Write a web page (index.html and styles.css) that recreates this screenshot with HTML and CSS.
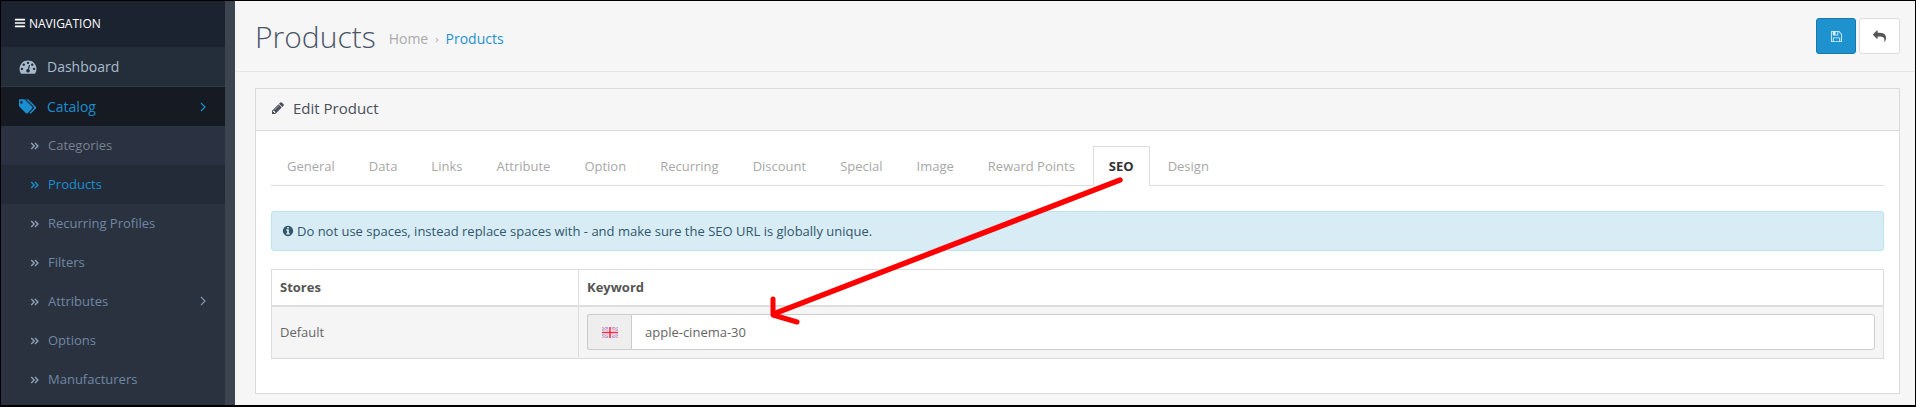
FILE: index.html
```html
<!DOCTYPE html>
<html lang="en">
<head>
    <meta charset="UTF-8">
    <meta name="viewport" content="width=device-width, initial-scale=1.0">
    <title>Products</title>
    <link rel="stylesheet" href="styles.css">
</head>
<body>
    <svg class="sprite" xmlns="http://www.w3.org/2000/svg">
        <symbol id="i-bars" viewBox="0 0 1792 1792"><path d="M1664 1344v128q0 26-19 45t-45 19h-1408q-26 0-45-19t-19-45v-128q0-26 19-45t45-19h1408q26 0 45 19t19 45zm0-512v128q0 26-19 45t-45 19h-1408q-26 0-45-19t-19-45v-128q0-26 19-45t45-19h1408q26 0 45 19t19 45zm0-512v128q0 26-19 45t-45 19h-1408q-26 0-45-19t-19-45v-128q0-26 19-45t45-19h1408q26 0 45 19t19 45z"/></symbol>
        <symbol id="i-dash" viewBox="0 0 1792 1792"><path d="M384 1152q0-53-37.5-90.5t-90.5-37.5-90.5 37.5-37.5 90.5 37.5 90.5 90.5 37.5 90.5-37.5 37.5-90.5zm192-448q0-53-37.5-90.5t-90.5-37.5-90.5 37.5-37.5 90.5 37.5 90.5 90.5 37.5 90.5-37.5 37.5-90.5zm428 481l101-382q6-26-7.5-48.5t-38.5-29.5-48 6.5-30 39.5l-101 382q-60 5-107 43.5t-63 98.5q-20 77 20 146t117 89 146-20 89-117q16-60-6-117t-72-91zm660-33q0-53-37.5-90.5t-90.5-37.5-90.5 37.5-37.5 90.5 37.5 90.5 90.5 37.5 90.5-37.5 37.5-90.5zm-640-640q0-53-37.5-90.5t-90.5-37.5-90.5 37.5-37.5 90.5 37.5 90.5 90.5 37.5 90.5-37.5 37.5-90.5zm448 192q0-53-37.5-90.5t-90.5-37.5-90.5 37.5-37.5 90.5 37.5 90.5 90.5 37.5 90.5-37.5 37.5-90.5zm320 448q0 261-141 483-19 29-54 29h-1402q-35 0-54-29-141-221-141-483 0-182 71-348t191-286 286-191 348-71 348 71 286 191 191 286 71 348z"/></symbol>
        <symbol id="i-tags" viewBox="0 0 1920 1792"><path d="M384 448q0-53-37.5-90.5t-90.5-37.5-90.5 37.5-37.5 90.5 37.5 90.5 90.5 37.5 90.5-37.5 37.5-90.5zm1067 576q0 53-37 90l-491 492q-39 37-91 37-53 0-90-37l-715-716q-38-37-64.5-101t-26.5-117v-416q0-52 38-90t90-38h416q53 0 117 26.5t102 64.5l715 714q37 39 37 91zm384 0q0 53-37 90l-491 492q-39 37-91 37-36 0-59-14t-53-45l470-470q37-37 37-90 0-52-37-91l-715-714q-38-38-102-64.5t-117-26.5h224q53 0 117 26.5t102 64.5l715 714q37 39 37 91z"/></symbol>
        <symbol id="i-double" viewBox="0 0 12 12"><path d="M1.5 2.5 5 6 1.5 9.5M6 2.5 9.5 6 6 9.5" fill="none" stroke="currentColor" stroke-width="1.7"/></symbol>
        <symbol id="i-angle" viewBox="0 0 8 12"><path d="M2 2 6 6 2 10" fill="none" stroke="currentColor" stroke-width="1.2"/></symbol>
        <symbol id="i-pencil" viewBox="0 0 1792 1792"><path d="M491 1536l91-91-235-235-91 91v107h128v128h107zm523-928q0-22-22-22-10 0-17 7l-542 542q-7 7-7 17 0 22 22 22 10 0 17-7l542-542q7-7 7-17zm-54-192l416 416-832 832h-416v-416zm683 96q0 53-37 90l-166 166-416-416 166-165q36-38 90-38 53 0 91 38l235 234q37 39 37 91z"/></symbol>
        <symbol id="i-info" viewBox="0 0 1792 1792"><path d="M1152 1376v-160q0-14-9-23t-23-9h-96v-512q0-14-9-23t-23-9h-320q-14 0-23 9t-9 23v160q0 14 9 23t23 9h96v320h-96q-14 0-23 9t-9 23v160q0 14 9 23t23 9h448q14 0 23-9t9-23zm-128-896v-160q0-14-9-23t-23-9h-192q-14 0-23 9t-9 23v160q0 14 9 23t23 9h192q14 0 23-9t9-23zm640 416q0 209-103 385.5t-279.5 279.5-385.5 103-385.5-103-279.5-279.5-103-385.5 103-385.5 279.5-279.5 385.5-103 385.5 103 279.5 279.5 103 385.5z"/></symbol>
        <symbol id="i-save" viewBox="0 0 1792 1792"><path d="M512 1536h768v-384h-768v384zm896 0h128v-896q0-14-10-38.5t-20-34.5l-281-281q-10-10-34-20t-39-10v416q0 40-28 68t-68 28h-576q-40 0-68-28t-28-68v-416h-128v1280h128v-416q0-40 28-68t68-28h832q40 0 68 28t28 68v416zm-384-928v-320q0-13-9.5-22.5t-22.5-9.5h-192q-13 0-22.5 9.5t-9.5 22.5v320q0 13 9.5 22.5t22.5 9.5h192q13 0 22.5-9.5t9.5-22.5zm640 32v928q0 40-28 68t-68 28h-1344q-40 0-68-28t-28-68v-1344q0-40 28-68t68-28h928q40 0 88 20t76 48l280 280q28 28 48 76t20 88z"/></symbol>
        <symbol id="i-reply" viewBox="0 0 1792 1792"><path d="M1792 1120q0 166-127 451-3 7-10.5 24t-13.5 30-13 22q-12 17-28 17-15 0-23.5-10t-8.5-25q0-9 2.5-26.5t2.5-23.5q5-68 5-123 0-101-17.5-181t-48.5-138.5-80-101-105.5-69.5-133-42.5-154-21.5-175.5-6h-224v256q0 26-19 45t-45 19-45-19l-512-512q-19-19-19-45t19-45l512-512q19-19 45-19t45 19 19 45v256h224q713 0 875 403 53 134 53 333z"/></symbol>
    </svg>

    <div class="frame">
        <aside class="sidebar">
            <nav class="menu">
                <div class="nav-title"><svg class="ico-bars"><use href="#i-bars"/></svg>NAVIGATION</div>
                <a class="top-item"><svg class="ico-top"><use href="#i-dash"/></svg>Dashboard</a>
                <a class="top-item active"><svg class="ico-top"><use href="#i-tags"/></svg>Catalog<svg class="ico-angle"><use href="#i-angle"/></svg></a>
                <a class="sub-item lighter"><svg class="ico-sub"><use href="#i-double"/></svg>Categories</a>
                <a class="sub-item current"><svg class="ico-sub"><use href="#i-double"/></svg>Products</a>
                <a class="sub-item"><svg class="ico-sub"><use href="#i-double"/></svg>Recurring Profiles</a>
                <a class="sub-item"><svg class="ico-sub"><use href="#i-double"/></svg>Filters</a>
                <a class="sub-item"><svg class="ico-sub"><use href="#i-double"/></svg>Attributes<svg class="ico-angle"><use href="#i-angle"/></svg></a>
                <a class="sub-item"><svg class="ico-sub"><use href="#i-double"/></svg>Options</a>
                <a class="sub-item"><svg class="ico-sub"><use href="#i-double"/></svg>Manufacturers</a>
            </nav>
        </aside>

        <main class="content">
            <div class="page-header">
                <h1>Products</h1>
                <ul class="breadcrumb">
                    <li>Home</li>
                    <li class="sep">›</li>
                    <li class="here">Products</li>
                </ul>
                <div class="actions">
                    <button class="btn btn-primary"><svg><use href="#i-save"/></svg></button>
                    <button class="btn btn-default"><svg><use href="#i-reply"/></svg></button>
                </div>
            </div>

            <section class="panel">
                <div class="panel-heading"><svg><use href="#i-pencil"/></svg>Edit Product</div>
                <div class="panel-body">
                    <ul class="tabs">
                        <li>General</li>
                        <li>Data</li>
                        <li>Links</li>
                        <li>Attribute</li>
                        <li>Option</li>
                        <li>Recurring</li>
                        <li>Discount</li>
                        <li>Special</li>
                        <li>Image</li>
                        <li>Reward Points</li>
                        <li class="active">SEO</li>
                        <li>Design</li>
                    </ul>
                    <div class="alert"><svg><use href="#i-info"/></svg>Do not use spaces, instead replace spaces with - and make sure the SEO URL is globally unique.</div>
                    <table class="seo-table">
                        <thead>
                            <tr><th class="col-store">Stores</th><th>Keyword</th></tr>
                        </thead>
                        <tbody>
                            <tr>
                                <td>Default</td>
                                <td>
                                    <div class="input-group">
                                        <span class="addon">
                                            <svg class="flag" viewBox="0 0 16 11">
                                                <rect width="16" height="11" fill="#a9a9e6"/>
                                                <path d="M0 0 16 11M16 0 0 11" stroke="#f6e3ea" stroke-width="2.4"/>
                                                <path d="M0 0 16 11M16 0 0 11" stroke="#ee6a7c" stroke-width=".7"/>
                                                <path d="M8 0V11M0 5.5H16" stroke="#f8f0f4" stroke-width="3.4"/>
                                                <path d="M8 0V11M0 5.5H16" stroke="#ee2f48" stroke-width="1.6"/>
                                            </svg>
                                        </span>
                                        <input type="text" value="apple-cinema-30">
                                    </div>
                                </td>
                            </tr>
                        </tbody>
                    </table>
                </div>
            </section>
        </main>

        <svg class="arrow" viewBox="0 0 1916 407">
            <path d="M1120 180 776 313" fill="none" stroke="#f00" stroke-width="5.5" stroke-linecap="round"/>
            <path d="M773 299 773 315 797 322" fill="none" stroke="#f00" stroke-width="5" stroke-linecap="round" stroke-linejoin="round"/>
        </svg>
    </div>
</body>
</html>
```

FILE: styles.css
```css
* {
    margin: 0;
    padding: 0;
    box-sizing: border-box;
}

html, body {
    height: 407px;
    overflow: hidden;
}

body {
    font-family: 'Open Sans', sans-serif;
    font-size: 13px;
    color: #666;
    background: #f6f6f6;
}

.sprite {
    display: none;
}

svg {
    fill: currentColor;
}

.frame {
    position: relative;
    display: flex;
    height: 407px;
    border: 1px solid #000;
    border-bottom-width: 2px;
    overflow: hidden;
}

/* sidebar */
.sidebar {
    flex: 0 0 234px;
    background: #3b444f;
    padding-right: 10px;
}

.menu {
    height: 100%;
    background: #2a3240;
}

.nav-title {
    display: flex;
    align-items: center;
    height: 46px;
    padding: 0 0 2px 13px;
    background: #1b2230;
    color: #fff;
    font-size: 12px;
}

.ico-bars {
    width: 12px;
    height: 12px;
    margin-right: 3px;
}

.top-item {
    display: flex;
    align-items: center;
    height: 40px;
    padding-left: 18px;
    background: #242e3b;
    color: #a9bacb;
    font-size: 14px;
    border-bottom: 1px solid #2f3946;
}

.top-item.active {
    background: #161a22;
    color: #1b8ecf;
    height: 39px;
    border-bottom: 0;
}

.ico-top {
    width: 18px;
    height: 17px;
    margin-right: 10px;
}

.ico-angle {
    width: 8px;
    height: 12px;
    margin-left: auto;
    margin-right: 18px;
    color: inherit;
}

.sub-item {
    display: flex;
    align-items: center;
    height: 39px;
    padding: 0 0 2px 29px;
    color: #6f87a3;
    font-size: 13px;
}

.sub-item .ico-angle {
    color: #8293a8;
}

.sub-item.lighter {
    color: #77818f;
    background: #2a3241;
}

.sub-item.current {
    color: #1b8ecf;
    background: #232b38;
}

.ico-sub {
    width: 10px;
    height: 10px;
    margin: 2px 8px 0 0;
    color: #8fa0b4;
}

.current .ico-sub {
    color: #1b8ecf;
}

/* page */
.content {
    flex: 1;
    min-width: 0;
}

.page-header {
    display: flex;
    align-items: center;
    height: 71px;
    padding: 0 15px 0 20px;
    border-bottom: 1px solid #e6e6e6;
}

.page-header h1 {
    font-size: 30px;
    font-weight: 300;
    color: #4a5568;
    margin-right: 13px;
}

.breadcrumb {
    display: flex;
    list-style: none;
    gap: 7px;
    margin-top: 5px;
    font-size: 14px;
    color: #aaa;
    align-items: center;
}

.breadcrumb .sep {
    font-size: 11px;
}

.breadcrumb .here {
    color: #1e91cf;
}

.actions {
    display: flex;
    gap: 3px;
    margin-left: auto;
}

.btn {
    width: 40px;
    height: 36px;
    border-radius: 3px;
    display: flex;
    align-items: center;
    justify-content: center;
}

.btn svg {
    width: 13px;
    height: 13px;
}

.btn-primary {
    background: #1e91cf;
    border: 1px solid #1978ab;
    color: #d8f2ff;
}

.btn-default {
    width: 41px;
    background: #fff;
    border: 1px solid #ddd;
    color: #555;
}

.panel {
    height: 306px;
    margin: 16px 15px 0 20px;
    background: #fff;
    border: 1px solid #dbdbdb;
}

.panel-heading {
    display: flex;
    align-items: center;
    height: 42px;
    padding: 0 0 4px 15px;
    background: #f6f6f6;
    border-bottom: 1px solid #dbdbdb;
    font-size: 15px;
    color: #4a4f5c;
}

.panel-heading svg {
    width: 14px;
    height: 14px;
    margin-right: 8px;
}

.panel-body {
    padding: 15px;
}

/* tabs */
.tabs {
    display: flex;
    list-style: none;
    height: 40px;
    border-bottom: 1px solid #ddd;
    margin-bottom: 25px;
    gap: 2px;
    color: #a8a8a8;
}

.tabs li {
    height: 40px;
    padding: 10px 15px;
    border: 1px solid transparent;
    border-bottom: 0;
}

.tabs li.active {
    background: #fff;
    border-color: #ddd;
    color: #333;
    font-weight: 700;
}

/* alert */
.alert {
    display: flex;
    align-items: center;
    height: 40px;
    padding-left: 10px;
    background: #d7ecf5;
    border: 1px solid #bde3f0;
    border-radius: 3px;
    color: #33576b;
    margin-bottom: 18px;
}

.alert svg {
    width: 12px;
    height: 12px;
    margin-right: 3px;
}

/* table */
.seo-table {
    width: 100%;
    border-collapse: collapse;
    table-layout: fixed;
}

.seo-table th, .seo-table td {
    border: 1px solid #ddd;
    padding: 0 8px;
    text-align: left;
}

.seo-table th {
    height: 36px;
    border-bottom-width: 2px;
    color: #555;
}

.seo-table td {
    height: 53px;
    background: #f5f5f5;
}

.col-store {
    width: 307px;
}

.input-group {
    display: flex;
    height: 36px;
}

.addon {
    display: flex;
    align-items: center;
    justify-content: center;
    width: 44px;
    background: #eee;
    border: 1px solid #ccc;
    border-right: 0;
    border-radius: 3px 0 0 3px;
}

.flag {
    width: 16px;
    height: 11px;
}

.input-group input {
    flex: 1;
    min-width: 0;
    padding: 0 13px;
    font: inherit;
    color: #666;
    background: #fff;
    border: 1px solid #ccc;
    border-radius: 0 3px 3px 0;
}

/* red annotation drawn on top of the screenshot */
.arrow {
    position: absolute;
    top: -1px;
    left: -1px;
    width: 1916px;
    height: 407px;
    pointer-events: none;
}
```
